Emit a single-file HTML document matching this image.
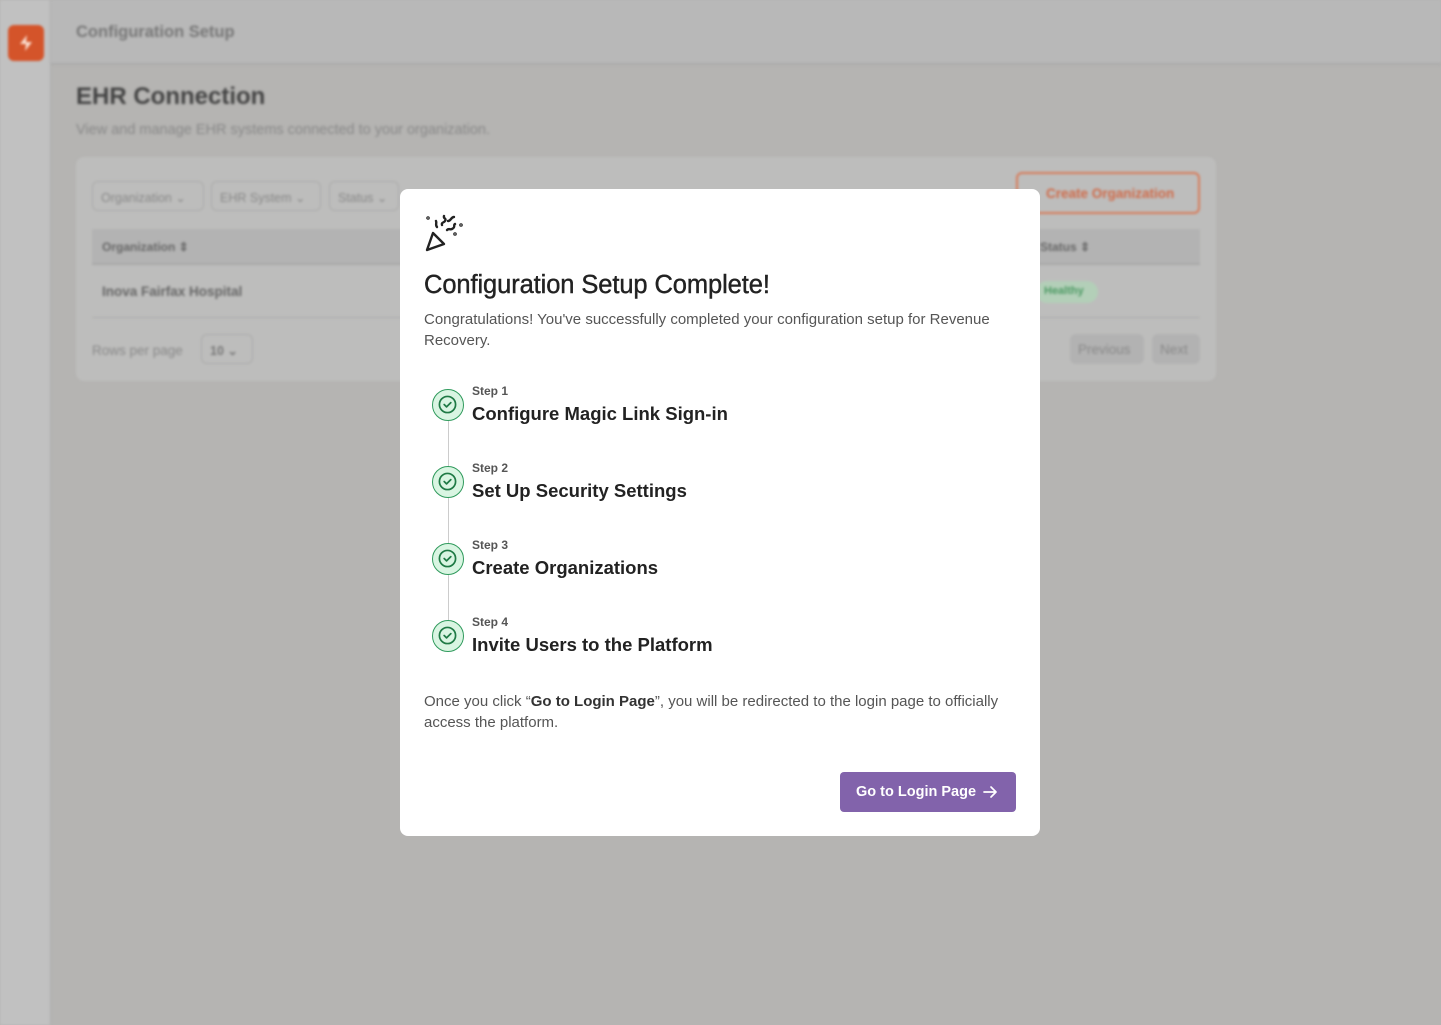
<!DOCTYPE html>
<html><head><meta charset="utf-8">
<style>
*{box-sizing:border-box;margin:0;padding:0}
html,body{width:1441px;height:1025px;overflow:hidden;font-family:"Liberation Sans",sans-serif;background:#b5b4b2}
.bg{position:absolute;inset:0;filter:blur(1.2px)}
.side{position:absolute;left:0;top:0;width:51px;height:1025px;background:#c1c1c1;border-right:1px solid #adadad}
.logo{position:absolute;left:8px;top:25px;width:36px;height:36px;border-radius:6px;background:#d4542a}
.head{position:absolute;left:51px;top:0;right:0;height:65px;background:#b8b8b8;border-bottom:2px solid #aaa}
.head span{position:absolute;left:25px;top:23px;font-weight:bold;font-size:16.5px;color:#777}
.t1{position:absolute;left:76px;top:83px;font-size:24px;font-weight:bold;color:#444}
.t2{position:absolute;left:76px;top:122px;font-size:14.5px;color:#888}
.card{position:absolute;left:76px;top:157px;width:1140px;height:224px;background:#bdbdbc;border-radius:8px}
.pill{position:absolute;height:30px;border:1px solid #aaa;border-radius:6px;font-size:12.5px;color:#888;padding:8px}
.th{position:absolute;left:16px;right:16px;top:72px;height:36px;background:#b3b3b3;border-bottom:2px solid #a8a8a8}
.modal{position:absolute;left:400px;top:189px;width:640px;height:647px;background:#fff;border-radius:8px;font-family:"Liberation Sans",sans-serif}
h1{position:absolute;left:24px;top:82px;font-size:25.5px;font-weight:normal;color:#222;letter-spacing:-0.1px;-webkit-text-stroke:.4px #222;white-space:nowrap}
.p{position:absolute;left:24px;font-size:15px;line-height:21px;color:#555;width:600px}
.step{position:absolute;left:24px;width:500px}
.circ{position:absolute;left:8px;top:6px;width:32px;height:32px;border-radius:50%;background:#d9f5e2;border:1.5px solid #2f9a5c}
.circ svg{position:absolute;left:5px;top:5px}
.sl{position:absolute;left:48px;top:1px;font-size:12px;font-weight:bold;color:#555}
.st{position:absolute;left:48px;top:20px;font-size:18.5px;font-weight:bold;color:#222;white-space:nowrap}
.line{position:absolute;left:48px;width:1px;background:#ccc}
.btn{position:absolute;left:440px;top:583px;width:176px;height:40px;background:#8263ab;border-radius:4px;color:#fff;font-weight:bold;font-size:14.5px;padding:12px 0 0 16px}
</style></head><body>
<div class="bg">
<div class="side"><div class="logo"><svg style="position:absolute;left:10px;top:9px" width="16" height="18" viewBox="0 0 16 18"><path d="M9 1 L2 10 H8 L7 17 L14 8 H8 Z" fill="#fbe0d2"/></svg></div></div>
<div class="head"><span>Configuration Setup</span></div>
<div class="t1">EHR Connection</div>
<div class="t2">View and manage EHR systems connected to your organization.</div>
<div class="card">
<div class="pill" style="left:16px;top:24px;width:112px">Organization ⌄</div>
<div class="pill" style="left:135px;top:24px;width:110px">EHR System ⌄</div>
<div class="pill" style="left:253px;top:24px;width:70px">Status ⌄</div>
<div class="pill" style="left:940px;top:15px;width:184px;height:42px;border:2px solid #d87a58;color:#d06a48;font-weight:bold;font-size:13.5px;padding:12px 0 0 28px">Create Organization</div>
<div class="th"><span style="position:absolute;left:10px;top:11px;font-size:12px;font-weight:bold;color:#666">Organization ⇕</span><span style="position:absolute;left:948px;top:11px;font-size:12px;font-weight:bold;color:#666">Status ⇕</span></div>
<div style="position:absolute;left:26px;top:127px;font-size:13.5px;font-weight:bold;color:#666">Inova Fairfax Hospital</div>
<div style="position:absolute;left:960px;top:124px;width:62px;height:22px;border-radius:11px;background:#b3cfb8;font-size:11px;color:#4d9a64;padding:4px 8px;font-weight:bold">Healthy</div>
<div style="position:absolute;left:16px;right:16px;top:160px;height:1px;background:#aaa"></div>
<div style="position:absolute;left:16px;top:186px;font-size:13.5px;color:#888">Rows per page</div>
<div class="pill" style="left:125px;top:177px;width:52px;font-weight:bold;color:#777">10 ⌄</div>
<div class="pill" style="left:994px;top:177px;width:74px;background:#b2b2b2;border:none;font-size:13.5px">Previous</div>
<div class="pill" style="left:1076px;top:177px;width:48px;background:#b2b2b2;border:none;font-size:13.5px">Next</div>
</div>
</div>
<div class="modal">
<svg style="position:absolute;left:25px;top:24px" width="40" height="40" viewBox="0 0 40 40" fill="none" stroke="#222" stroke-width="2.4" stroke-linecap="round" stroke-linejoin="round">
<path d="M2 37 L8 20 L19 31 Z"/><path d="M11 8 C12 10 10 12 12 14"/><path d="M19 3 C18 6 22 5 20 8 C19 10 16 9 17 12"/><path d="M29 4 C26 4 26 8 23 8"/><path d="M30 11 C28 12 31 14 27 16 C25 17 24 15 22 17"/><circle cx="3" cy="5" r=".6"/><circle cx="30" cy="21" r=".6"/><circle cx="36" cy="12" r=".6"/>
</svg>
<h1>Configuration Setup Complete!</h1>
<div class="p" style="top:120px">Congratulations! You've successfully completed your configuration setup for Revenue Recovery.</div>
<div class="line" style="top:225px;height:220px"></div>
<div class="step" style="top:194px"><div class="circ"><svg width="19" height="19" viewBox="0 0 20 20" fill="none" stroke="#1f7a45" stroke-width="1.8"><circle cx="10" cy="10" r="8.5"/><path d="M6.5 10 L9 12.5 L13.5 8" stroke-linecap="round" stroke-linejoin="round"/></svg></div><div class="sl">Step 1</div><div class="st">Configure Magic Link Sign-in</div></div>
<div class="step" style="top:271px"><div class="circ"><svg width="19" height="19" viewBox="0 0 20 20" fill="none" stroke="#1f7a45" stroke-width="1.8"><circle cx="10" cy="10" r="8.5"/><path d="M6.5 10 L9 12.5 L13.5 8" stroke-linecap="round" stroke-linejoin="round"/></svg></div><div class="sl">Step 2</div><div class="st">Set Up Security Settings</div></div>
<div class="step" style="top:348px"><div class="circ"><svg width="19" height="19" viewBox="0 0 20 20" fill="none" stroke="#1f7a45" stroke-width="1.8"><circle cx="10" cy="10" r="8.5"/><path d="M6.5 10 L9 12.5 L13.5 8" stroke-linecap="round" stroke-linejoin="round"/></svg></div><div class="sl">Step 3</div><div class="st">Create Organizations</div></div>
<div class="step" style="top:425px"><div class="circ"><svg width="19" height="19" viewBox="0 0 20 20" fill="none" stroke="#1f7a45" stroke-width="1.8"><circle cx="10" cy="10" r="8.5"/><path d="M6.5 10 L9 12.5 L13.5 8" stroke-linecap="round" stroke-linejoin="round"/></svg></div><div class="sl">Step 4</div><div class="st">Invite Users to the Platform</div></div>
<div class="p" style="top:502px">Once you click “<b style="color:#333">Go to Login Page</b>”, you will be redirected to the login page to officially access the platform.</div>
<div class="btn">Go to Login Page<svg style="position:absolute;left:142px;top:12px" width="16" height="16" viewBox="0 0 16 16" fill="none" stroke="#fff" stroke-width="1.7" stroke-linecap="round" stroke-linejoin="round"><path d="M2 8 H14 M9 3 L14 8 L9 13"/></svg></div>
</div>
</body></html>
